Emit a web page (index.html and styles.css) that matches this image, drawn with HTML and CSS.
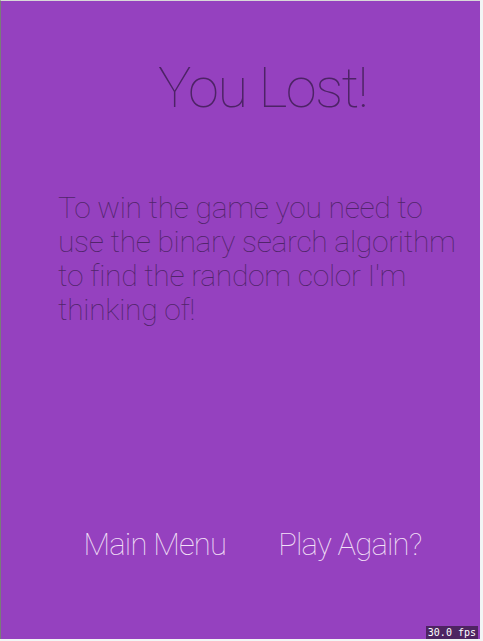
FILE: index.html
```html
<!DOCTYPE html>
<html>
<head>
<meta charset="utf-8">
<link rel="stylesheet" href="styles.css">
</head>
<body>
<div class="screen">
  <h1 class="title">You Lost!</h1>
  <p class="message">To win the game you need to use the binary search algorithm to find the random color I'm thinking of!</p>
  <div class="actions">
    <span class="btn">Main Menu</span>
    <span class="btn">Play Again?</span>
  </div>
  <div class="fps">30.0 fps</div>
</div>
</body>
</html>
```
FILE: styles.css
```css
html, body {
  margin: 0;
  padding: 0;
  background: #f2f5f5;
}
body {
  width: 483px;
  height: 641px;
  overflow: hidden;
}
.screen {
  position: relative;
  box-sizing: border-box;
  width: 480px;
  height: 639px;
  background: #9541bf;
  border-top: 1px solid #d8d8d8;
  border-left: 1px solid #7a7a7a;
  display: flex;
  flex-direction: column;
  font-family: "Roboto", "Liberation Sans", sans-serif;
  font-weight: 100;
}
.title {
  margin: 52px 0 0 0;
  padding-left: 44px;
  text-align: center;
  font-size: 56px;
  font-weight: 100;
  color: #4d2366;
  line-height: 70px;
  letter-spacing: -1.5px;
}
.message {
  margin: 68px 8px 0 57px;
  font-size: 30px;
  line-height: 34px;
  color: #51256b;
  letter-spacing: -0.3px;
}
.actions {
  margin-top: auto;
  margin-bottom: 76px;
  display: flex;
  justify-content: center;
  gap: 52px;
  padding-left: 24px;
}
.btn {
  font-size: 31px;
  color: #f4e2f8;
  letter-spacing: -0.8px;
}
.fps {
  position: absolute;
  right: 2px;
  bottom: 0;
  padding: 0 2px;
  background: #4e2462;
  color: #ffffff;
  font-family: "DejaVu Sans Mono", monospace;
  font-weight: 400;
  font-size: 10px;
  line-height: 13px;
}
```
